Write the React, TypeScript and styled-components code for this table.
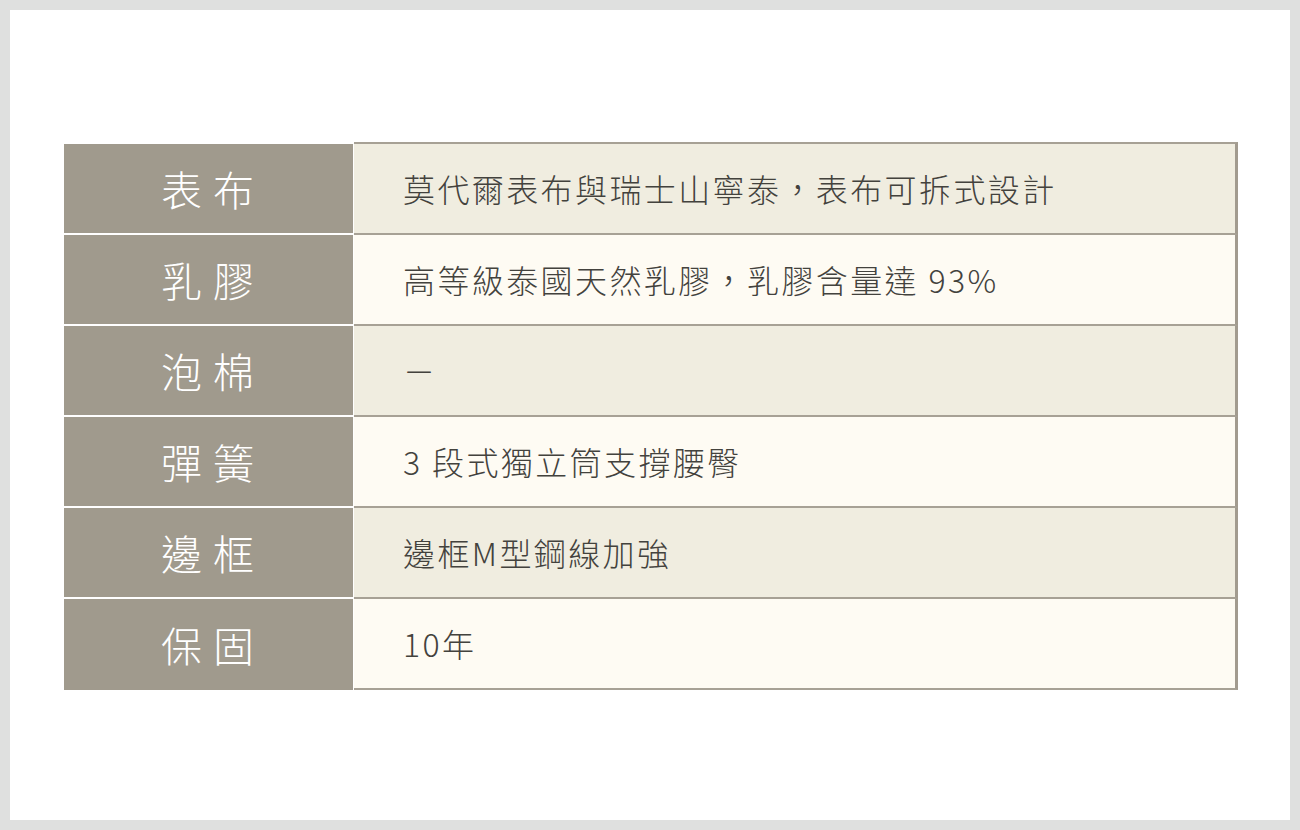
import styled, { createGlobalStyle } from "styled-components";

const GlobalStyle = createGlobalStyle`
  html, body {
    margin: 0;
    padding: 0;
    background: #dfe0df;
  }
  body {
    font-family: "Noto Sans CJK TC", "Noto Sans", sans-serif;
  }
`;

const Page = styled.div`
  margin: 10px;
  height: 810px;
  background: #ffffff;
  box-sizing: border-box;
  padding: 132px 0 0 54px;
`;

const Table = styled.div`
  width: 1174px;
  display: flex;
  flex-direction: column;
`;

const Row = styled.div`
  display: flex;
  align-items: flex-end;
`;

const HeadCell = styled.div<{ $last?: boolean }>`
  width: 289px;
  height: 91px;
  margin-right: 1px;
  box-sizing: border-box;
  background: #a09a8d;
  border-bottom: ${({ $last }) => ($last ? "none" : "2px solid #ffffff")};
  display: flex;
  align-items: center;
  justify-content: center;
  padding: 0 0 2px 9px;
  color: #ffffff;
  font-size: 41px;
  font-weight: 300;
  letter-spacing: 11px;
`;

const ValueCell = styled.div<{ $alt?: boolean; $first?: boolean }>`
  flex: 1;
  height: ${({ $first }) => ($first ? "93px" : "91px")};
  box-sizing: border-box;
  background: ${({ $alt }) => ($alt ? "#fefbf3" : "#f0ede0")};
  border-top: ${({ $first }) => ($first ? "2px solid #a7a195" : "none")};
  border-right: 3px solid #a29b8f;
  border-bottom: 2px solid #a7a195;
  display: flex;
  align-items: center;
  padding: 0 0 2px 49px;
  color: #43423d;
  font-size: 32px;
  font-weight: 300;
  letter-spacing: 2.4px;
`;

const specs = [
  { label: "表布", value: "莫代爾表布與瑞士山寧泰，表布可拆式設計" },
  { label: "乳膠", value: "高等級泰國天然乳膠，乳膠含量達 93%" },
  { label: "泡棉", value: "－" },
  { label: "彈簧", value: "3 段式獨立筒支撐腰臀" },
  { label: "邊框", value: "邊框M型鋼線加強" },
  { label: "保固", value: "10年" },
];

export default function App() {
  return (
    <>
      <GlobalStyle />
      <Page>
        <Table>
          {specs.map((s, i) => (
            <Row key={s.label}>
              <HeadCell $last={i === specs.length - 1}>{s.label}</HeadCell>
              <ValueCell $first={i === 0} $alt={i % 2 === 1}>
                {s.value}
              </ValueCell>
            </Row>
          ))}
        </Table>
      </Page>
    </>
  );
}
